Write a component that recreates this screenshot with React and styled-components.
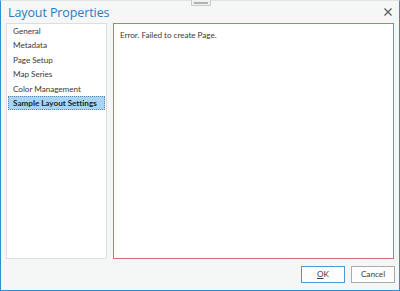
import React, { useState } from 'react';
import styled, { createGlobalStyle } from 'styled-components';

const GlobalStyle = createGlobalStyle`
  html, body {
    margin: 0;
    padding: 0;
    background: #f5f6f6;
  }
  body {
    font-family: Lato, 'Open Sans', sans-serif;
  }
`;

const Window = styled.div`
  position: relative;
  box-sizing: border-box;
  width: 400px;
  height: 291px;
  display: flex;
  flex-direction: column;
  background: #f5f6f6;
  border: 1px solid #2f8ed3;
  border-top-color: #dfe3e6;
`;

const Grip = styled.div`
  position: absolute;
  top: -1px;
  left: 190px;
  width: 20px;
  height: 6px;
  box-sizing: border-box;
  border: 1px solid #c9cbcd;
  border-top: none;
  background: #f0f0f0;
  display: flex;
  align-items: center;
  justify-content: center;

  &::after {
    content: '';
    width: 14px;
    height: 2px;
    background: #b0b2b4;
  }
`;

const TitleBar = styled.div`
  height: 22px;
  flex: 0 0 auto;
  display: flex;
  align-items: center;
  justify-content: space-between;
  padding: 0 6px 0 7px;
`;

const Title = styled.span`
  color: #2b7cc4;
  font-family: 'Open Sans', sans-serif;
  font-size: 12.5px;
  letter-spacing: -0.1px;
`;

const CloseButton = styled.button`
  border: none;
  background: transparent;
  padding: 0;
  width: 10px;
  height: 10px;
  display: flex;
  align-items: center;
  justify-content: center;
  cursor: pointer;
`;

const Body = styled.div`
  flex: 1 1 auto;
  display: flex;
  gap: 6px;
  padding: 0 5px;
  min-height: 0;
`;

const ListPanel = styled.ul`
  width: 101px;
  box-sizing: border-box;
  margin: 0;
  padding: 0 1px;
  list-style: none;
  background: #fff;
  border: 1px solid #dedede;
`;

const ListItem = styled.li`
  height: 14.4px;
  line-height: 14.4px;
  box-sizing: border-box;
  padding-left: 5px;
  font-size: 8.2px;
  letter-spacing: -0.05px;
  color: ${props => (props.selected ? '#1c2730' : '#3c3c3c')};
  font-weight: ${props => (props.selected ? 700 : 400)};
  background: ${props => (props.selected ? '#a9d5f2' : 'transparent')};
  outline: ${props => (props.selected ? '1px dotted #5a8ab0' : 'none')};
  outline-offset: -1px;
  white-space: nowrap;
  cursor: default;
`;

const ContentPanel = styled.div`
  flex: 1 1 auto;
  box-sizing: border-box;
  background: #fff;
  border: 1px solid #e06a6a;
  padding: 6px 6px;
`;

const Message = styled.p`
  margin: 0;
  font-size: 8.2px;
  letter-spacing: -0.05px;
  color: #3c3c3c;
`;

const Footer = styled.div`
  height: 30px;
  flex: 0 0 auto;
  display: flex;
  align-items: center;
  justify-content: flex-end;
  gap: 6px;
  padding: 0 4px 1px 0;
`;

const Button = styled.button`
  width: 44px;
  height: 17px;
  box-sizing: border-box;
  padding: 0;
  font-family: inherit;
  font-size: 8.2px;
  color: #3c3c3c;
  background: #fdfdfd;
  border: 1px solid ${props => (props.primary ? '#4a9ad8' : '#ababab')};
  cursor: pointer;

  u {
    text-decoration: underline;
  }
`;

const pages = [
  'General',
  'Metadata',
  'Page Setup',
  'Map Series',
  'Color Management',
  'Sample Layout Settings',
];

export default function App() {
  const [selected, setSelected] = useState(5);

  return (
    <>
      <GlobalStyle />
      <Window>
        <Grip />
        <TitleBar>
          <Title>Layout Properties</Title>
          <CloseButton aria-label="Close">
            <svg width="8" height="8" viewBox="0 0 8 8">
              <path d="M0.5 0.5 L7.5 7.5 M7.5 0.5 L0.5 7.5" stroke="#5a5a5a" strokeWidth="1.2" />
            </svg>
          </CloseButton>
        </TitleBar>
        <Body>
          <ListPanel>
            {pages.map((p, i) => (
              <ListItem key={p} selected={i === selected} onClick={() => setSelected(i)}>
                {p}
              </ListItem>
            ))}
          </ListPanel>
          <ContentPanel>
            <Message>Error. Failed to create Page.</Message>
          </ContentPanel>
        </Body>
        <Footer>
          <Button primary><u>O</u>K</Button>
          <Button>Cancel</Button>
        </Footer>
      </Window>
    </>
  );
}
